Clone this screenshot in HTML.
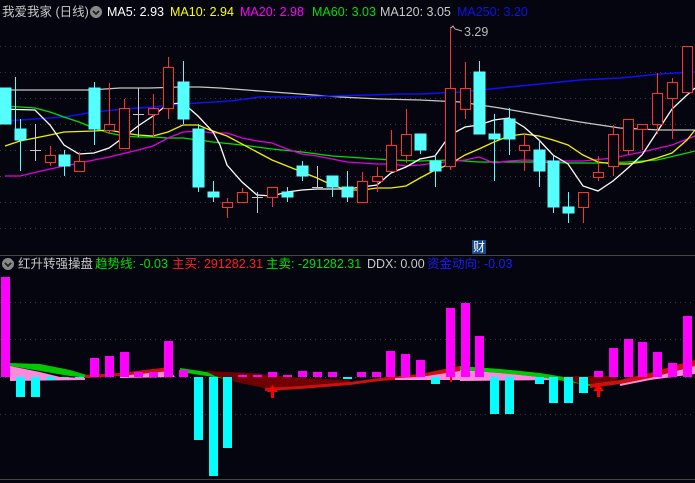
<!DOCTYPE html>
<html><head><meta charset="utf-8"><style>
body{margin:0;background:#05050f;width:695px;height:483px;overflow:hidden;position:relative;font-family:"Liberation Sans","Noto Sans CJK SC",sans-serif;}
.t{position:absolute;font-size:12.5px;white-space:nowrap;line-height:14px}
svg{position:absolute;left:0;top:0}
</style></head><body>
<svg width="695" height="483" viewBox="0 0 695 483" shape-rendering="crispEdges">
<g stroke="#3a3a3a" stroke-dasharray="1,4" stroke-width="1">
<line x1="0" y1="46.5" x2="695" y2="46.5"/><line x1="0" y1="72.5" x2="695" y2="72.5"/><line x1="0" y1="98.5" x2="695" y2="98.5"/><line x1="0" y1="124.5" x2="695" y2="124.5"/><line x1="0" y1="150.5" x2="695" y2="150.5"/><line x1="0" y1="176.5" x2="695" y2="176.5"/><line x1="0" y1="202.5" x2="695" y2="202.5"/><line x1="0" y1="228.5" x2="695" y2="228.5"/>
<line x1="0" y1="302.5" x2="695" y2="302.5"/><line x1="0" y1="339.5" x2="695" y2="339.5"/><line x1="0" y1="377.5" x2="695" y2="377.5"/><line x1="0" y1="414.5" x2="695" y2="414.5"/>
</g>
<line x1="0" y1="255.5" x2="695" y2="255.5" stroke="#444"/>
<line x1="0" y1="479.5" x2="695" y2="479.5" stroke="#444"/>
<!-- MA lines -->
<g fill="none" stroke-width="1.3" shape-rendering="auto">
<polyline stroke="#c8c8c8" points="5,90 60,90 90,90 120,88 150,88 180,87 200,87 220,88 260,91 300,94 340,97 380,99 420,100 460,102 500,108 540,115 580,122 620,128 660,130 695,130"/>
<polyline stroke="#1010f0" stroke-width="1.6" points="5,121 35,119 64,117 94,112 124,109 153,107 183,104 198,103 230,101 260,97 300,97 330,96 370,95 400,94 420,94 460,92 500,88 540,84 580,80 620,78 660,74 695,72"/>
<polyline stroke="#00e000" points="5,106 20,107 35,108 50,112 64,117 79,122 94,128 109,133 124,136 138,137 153,137 168,138 183,138 198,140 213,142 242,145 272,149 302,152 332,156 362,158 391,160 420,161 450,160 479,162 509,162 539,162 568,163 598,163 628,162 657,160 687,153 695,151"/>
<polyline stroke="#e000e0" points="5,176 20,176 50,169 79,163 109,157 138,150 153,146 168,138 183,132 198,131 213,133 227,133 242,138 257,141 272,143 287,149 302,154 317,156 347,162 377,164 391,164 406,166 420,165 435,163 465,160 479,157 494,163 509,161 524,160 553,161 583,161 613,158 642,152 672,145 695,136"/>
<polyline stroke="#f0f000" points="5,146 20,141 50,135 64,132 94,131 109,130 124,133 138,135 153,136 168,132 183,125 198,125 210,130 227,136 257,152 272,160 287,166 302,172 317,178 332,185 347,190 362,190 377,188 391,188 406,186 420,178 435,170 450,164 465,155 479,149 494,142 509,136 524,134 539,136 553,140 568,145 583,155 598,162 613,164 628,164 642,162 657,158 672,153 687,140 695,130"/>
<polyline stroke="#ffffff" points="0,109 35,110 50,125 64,145 79,154 94,153 109,148 124,137 138,126 153,116 168,104 183,103 198,116 213,132 220,145 227,165 242,182 257,195 272,196 287,192 302,190 317,189 347,189 362,187 377,185 391,173 406,167 420,159 435,156 450,135 465,127 479,125 494,120 509,118 524,127 539,140 553,155 568,164 583,186 598,191 613,181 628,168 642,155 657,132 672,109 687,95 695,88"/>
</g>
<!-- candles -->
<g id="c">
<!-- cyan: wick then body -->
<g stroke="#55ffff" fill="#55ffff">
<line x1="15.5" y1="77" x2="15.5" y2="139"/><rect x="0" y="88" width="11" height="36"/>
<line x1="20.5" y1="119" x2="20.5" y2="171"/><rect x="15" y="129" width="11" height="11"/>
<line x1="64.5" y1="150" x2="64.5" y2="176"/><rect x="59" y="155" width="11" height="11"/>
<line x1="94.5" y1="82" x2="94.5" y2="145"/><rect x="89" y="88" width="11" height="41"/>
<line x1="183.5" y1="61" x2="183.5" y2="124"/><rect x="178" y="82" width="11" height="37"/>
<line x1="198.5" y1="124" x2="198.5" y2="192"/><rect x="193" y="129" width="11" height="58"/>
<line x1="213.5" y1="181" x2="213.5" y2="202"/><rect x="208" y="192" width="11" height="5"/>
<line x1="287.5" y1="187" x2="287.5" y2="202"/><rect x="282" y="192" width="11" height="5"/>
<line x1="302.5" y1="161" x2="302.5" y2="181"/><rect x="297" y="166" width="11" height="10"/>
<line x1="332.5" y1="176" x2="332.5" y2="197"/><rect x="327" y="176" width="11" height="11"/>
<line x1="347.5" y1="171" x2="347.5" y2="202"/><rect x="342" y="187" width="11" height="10"/>
<line x1="420.5" y1="134" x2="420.5" y2="154"/><rect x="415" y="134" width="11" height="16"/>
<line x1="435.5" y1="155" x2="435.5" y2="187"/><rect x="430" y="161" width="11" height="10"/>
<line x1="479.5" y1="61" x2="479.5" y2="134"/><rect x="474" y="72" width="11" height="62"/>
<line x1="494.5" y1="114" x2="494.5" y2="181"/><rect x="489" y="134" width="11" height="5"/>
<line x1="509.5" y1="108" x2="509.5" y2="155"/><rect x="504" y="119" width="11" height="20"/>
<line x1="539.5" y1="140" x2="539.5" y2="187"/><rect x="534" y="150" width="11" height="21"/>
<line x1="553.5" y1="155" x2="553.5" y2="213"/><rect x="548" y="161" width="11" height="46"/>
<line x1="568.5" y1="192" x2="568.5" y2="223"/><rect x="563" y="207" width="11" height="6"/>
</g>
<g stroke="#c8c8c8">
<line x1="35.5" y1="124" x2="35.5" y2="161"/><line x1="30" y1="150.5" x2="41" y2="150.5"/>
<line x1="138.5" y1="88" x2="138.5" y2="137"/><line x1="133" y1="114.5" x2="144" y2="114.5"/>
<line x1="257.5" y1="192" x2="257.5" y2="213"/><line x1="252" y1="197.5" x2="263" y2="197.5"/>
<line x1="317.5" y1="166" x2="317.5" y2="187"/><line x1="312" y1="187.5" x2="323" y2="187.5"/>
</g>
<g stroke="#ff3030" fill="#05050f" stroke-width="1">
<line x1="50.5" y1="146" x2="50.5" y2="166"/><rect x="45.5" y="155.5" width="10" height="7"/>
<line x1="79.5" y1="152" x2="79.5" y2="172"/><rect x="74.5" y="161.5" width="10" height="10"/>
<line x1="109.5" y1="83" x2="109.5" y2="134"/><rect x="104.5" y="124.5" width="10" height="6"/>
<line x1="124.5" y1="99" x2="124.5" y2="149"/><rect x="119.5" y="108.5" width="10" height="40"/>
<line x1="153.5" y1="94" x2="153.5" y2="138"/><rect x="148.5" y="108.5" width="10" height="6"/>
<line x1="168.5" y1="57" x2="168.5" y2="119"/><rect x="163.5" y="67.5" width="10" height="41"/>
<line x1="227.5" y1="198" x2="227.5" y2="218"/><rect x="222.5" y="202.5" width="10" height="5"/>
<line x1="242.5" y1="188" x2="242.5" y2="202"/><rect x="237.5" y="192.5" width="10" height="10"/>
<line x1="272.5" y1="187" x2="272.5" y2="207"/><rect x="267.5" y="187.5" width="10" height="10"/>
<line x1="362.5" y1="172" x2="362.5" y2="202"/><rect x="357.5" y="181.5" width="10" height="21"/>
<line x1="377.5" y1="167" x2="377.5" y2="192"/><rect x="372.5" y="176.5" width="10" height="5"/>
<line x1="391.5" y1="130" x2="391.5" y2="172"/><rect x="386.5" y="145.5" width="10" height="26"/>
<line x1="406.5" y1="109" x2="406.5" y2="163"/><rect x="401.5" y="134.5" width="10" height="21"/>
<line x1="450.5" y1="27" x2="450.5" y2="170"/><rect x="445.5" y="88.5" width="10" height="78"/>
<line x1="465.5" y1="62" x2="465.5" y2="119"/><rect x="460.5" y="88.5" width="10" height="21"/>
<line x1="524.5" y1="134" x2="524.5" y2="171"/><rect x="519.5" y="145.5" width="10" height="5"/>
<line x1="583.5" y1="192" x2="583.5" y2="223"/><rect x="578.5" y="192.5" width="10" height="15"/>
<line x1="598.5" y1="156" x2="598.5" y2="181"/><rect x="593.5" y="172.5" width="10" height="5"/>
<line x1="613.5" y1="125" x2="613.5" y2="176"/><rect x="608.5" y="134.5" width="10" height="32"/>
<line x1="628.5" y1="119" x2="628.5" y2="155"/><rect x="623.5" y="119.5" width="10" height="31"/>
<line x1="642.5" y1="124" x2="642.5" y2="150"/><rect x="637.5" y="124.5" width="10" height="5"/>
<line x1="657.5" y1="73" x2="657.5" y2="134"/><rect x="652.5" y="93.5" width="10" height="31"/>
<line x1="672.5" y1="78" x2="672.5" y2="139"/><rect x="667.5" y="82.5" width="10" height="16"/>
<line x1="687.5" y1="46" x2="687.5" y2="93"/><rect x="682.5" y="46.5" width="10" height="46"/>
</g>
</g>
<polyline points="451,28 453,26 455,29 462,31" fill="none" stroke="#bbb" shape-rendering="auto"/>
<!-- lower ribbons -->
<g shape-rendering="auto">
<polygon fill="#ff88dd" points="10,366 40,372 60,377 85,378 85,380 10,381"/>
<polygon fill="#00c800" points="10,363 40,364 70,370 90,376 90,378 70,376 40,371 10,366"/>
<polygon fill="#cc1010" points="85,375 120,373 170,367 170,371 120,376 85,378"/>
<polygon fill="#ff88dd" points="120,376 170,371 175,377 120,378"/>
<polygon fill="#00c800" points="180,368 220,374 265,384 265,388 220,378 180,372"/>
<polygon fill="#700000" points="205,371 250,373 300,378 350,380 350,384 300,386 265,388 240,383 215,376"/>
<polygon fill="#cc1010" points="265,388 300,386 350,382 380,378 420,374 460,366 460,371 420,378 380,381 350,385 300,389 265,391"/>
<polygon fill="#ff88dd" points="395,378 420,377 460,371 460,380 395,380"/>
<polygon fill="#00c800" points="460,366 500,369 540,373 570,378 590,382 600,386 600,388 570,382 540,377 500,373 460,370"/>
<polygon fill="#ff88dd" points="460,370 500,373 540,377 560,380 460,381"/>
<polygon fill="#700000" points="560,376 610,376 620,379 600,384 580,384"/>
<polygon fill="#cc1010" points="590,384 620,380 650,373 680,364 695,360 695,366 680,370 650,378 620,384 590,388"/>
<polygon fill="#ff88dd" points="620,384 650,378 680,370 695,366 695,374 680,376 650,380 620,386"/>
</g>
<!-- bars -->
<g fill="#ff00ff">
<rect x="1" y="277" width="9" height="100"/>
<rect x="90" y="358" width="9" height="19"/><rect x="105" y="356" width="9" height="21"/><rect x="120" y="352" width="9" height="25"/><rect x="134" y="372" width="9" height="5"/><rect x="149" y="372" width="9" height="5"/><rect x="164" y="341" width="9" height="36"/><rect x="179" y="370" width="9" height="7"/>
<rect x="238" y="375" width="9" height="2"/><rect x="253" y="375" width="9" height="2"/><rect x="268" y="372" width="9" height="5"/><rect x="283" y="375" width="9" height="2"/><rect x="298" y="371" width="9" height="6"/><rect x="313" y="372" width="9" height="5"/><rect x="328" y="372" width="9" height="5"/>
<rect x="357" y="372" width="9" height="5"/><rect x="372" y="372" width="9" height="5"/><rect x="386" y="351" width="9" height="26"/><rect x="401" y="354" width="9" height="23"/><rect x="416" y="360" width="9" height="17"/>
<rect x="446" y="308" width="9" height="69"/><rect x="461" y="303" width="9" height="74"/><rect x="475" y="336" width="9" height="41"/>
<rect x="594" y="371" width="9" height="6"/><rect x="609" y="348" width="9" height="29"/><rect x="624" y="339" width="9" height="38"/><rect x="638" y="342" width="9" height="35"/><rect x="653" y="352" width="9" height="25"/><rect x="668" y="363" width="9" height="14"/><rect x="683" y="316" width="9" height="61"/>
</g>
<g fill="#00ffff">
<rect x="16" y="377" width="9" height="20"/><rect x="31" y="377" width="9" height="20"/><rect x="46" y="377" width="9" height="3"/><rect x="60" y="377" width="9" height="1"/><rect x="75" y="377" width="9" height="1"/>
<rect x="194" y="377" width="9" height="63"/><rect x="209" y="377" width="9" height="99"/><rect x="223" y="377" width="9" height="71"/><rect x="343" y="377" width="9" height="2"/>
<rect x="431" y="377" width="9" height="7"/><rect x="490" y="377" width="9" height="37"/><rect x="505" y="377" width="9" height="37"/><rect x="535" y="377" width="9" height="7"/><rect x="549" y="377" width="9" height="26"/><rect x="564" y="377" width="9" height="26"/><rect x="579" y="377" width="9" height="16"/>
</g>
<g fill="#ff0000" shape-rendering="auto">
<polygon points="272.5,385 267,392 271,392 271,398 274,398 274,392 278,392"/>
<polygon points="598.5,384 593,391 597,391 597,397 600,397 600,391 604,391"/>
<rect x="450" y="377" width="2" height="5"/>
</g>
<rect x="472" y="240" width="14" height="14" fill="#16488a"/>
<circle cx="96" cy="12" r="6" fill="#888"/><polyline points="93,11 96,14 99,11" fill="none" stroke="#222" stroke-width="1.5"/>
<circle cx="8" cy="264" r="6" fill="#888"/><polyline points="5,263 8,266 11,263" fill="none" stroke="#222" stroke-width="1.5"/>
</svg>
<div class="t" style="left:2px;top:5px;color:#c8c8c8">我爱我家 (日线)</div>
<div class="t" style="left:107px;top:5px;color:#fff">MA5: 2.93</div>
<div class="t" style="left:170px;top:5px;color:#ffff00">MA10: 2.94</div>
<div class="t" style="left:240px;top:5px;color:#ff00ff">MA20: 2.98</div>
<div class="t" style="left:312px;top:5px;color:#00e000">MA60: 3.03</div>
<div class="t" style="left:380px;top:5px;color:#c8c8c8">MA120: 3.05</div>
<div class="t" style="left:457px;top:5px;color:#1010f0">MA250: 3.20</div>
<div class="t" style="left:464px;top:25px;color:#bbb">3.29</div>
<div class="t" style="left:473px;top:240px;color:#fff;font-size:12px">财</div>
<div class="t" style="left:18px;top:257px;color:#c8c8c8">红升转强操盘</div>
<div class="t" style="left:95px;top:257px;color:#00e000">趋势线: -0.03</div>
<div class="t" style="left:172px;top:257px;color:#ff2020">主买: 291282.31</div>
<div class="t" style="left:266px;top:257px;color:#00e000">主卖: -291282.31</div>
<div class="t" style="left:367px;top:257px;color:#c8c8c8">DDX: 0.00</div>
<div class="t" style="left:427px;top:257px;color:#1a1aff">资金动向: -0.03</div>
</body></html>
